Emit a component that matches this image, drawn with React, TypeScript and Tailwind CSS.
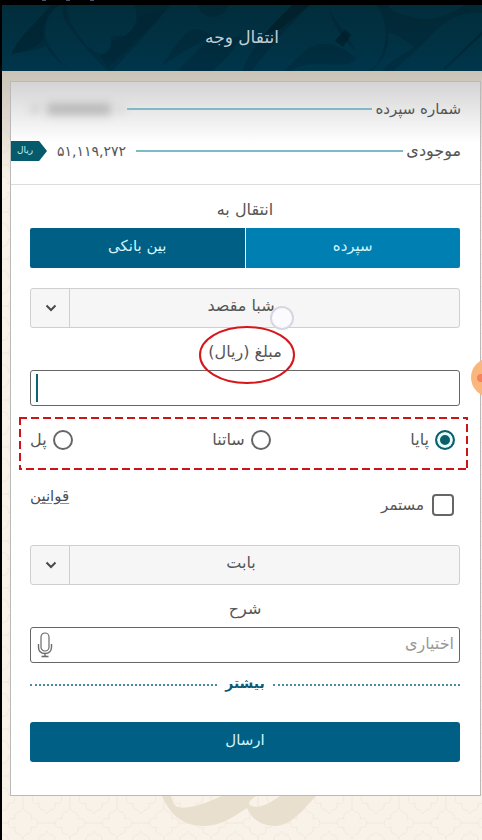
import React, { useState } from 'react';

const TRANSFER_TYPES = [
  { id: 'paya', label: 'پایا' },
  { id: 'satna', label: 'ساتنا' },
  { id: 'pol', label: 'پل' },
];

const HeaderPattern = () => (
  <svg
    className="absolute inset-0 w-full h-full"
    viewBox="0 0 480 66"
    preserveAspectRatio="xMidYMid slice"
    aria-hidden="true"
  >
    <defs>
      <linearGradient id="ground" x1="0" y1="0" x2="0" y2="1">
        <stop offset="0" stopColor="#022734" />
        <stop offset="1" stopColor="#002e42" />
      </linearGradient>
      <linearGradient id="band" gradientUnits="userSpaceOnUse" x1="0" y1="0" x2="0" y2="66">
        <stop offset="0" stopColor="#022d3b" />
        <stop offset="1" stopColor="#00354a" />
      </linearGradient>
    </defs>
    <rect width="480" height="66" fill="url(#ground)" />
    <path d="M48 2C34 14 14 30 9 48C20 50 34 42 42 34C40 20 44 8 58 0Z" fill="#01202c" opacity="0.35" />
    <path d="M284 0H308L278 24L262 30Z" fill="#011d27" opacity="0.6" />
    <path d="M164 4C150 22 128 40 106 62L98 50C106 50 112 44 109 36C122 34 134 26 136 12Z" fill="#01222f" opacity="0.3" />
    <g fill="url(#band)">
      <path d="M0 0H48C38 16 18 28 9 50C12 60 18 64 24 66H0Z" />
      <path d="M9 50C24 44 34 48 44 40C50 54 62 60 68 66H20C12 62 8 58 9 50Z" />
      <path d="M58 0C40 12 40 32 50 45C56 54 62 60 68 66H106C92 54 74 32 62 14C60 8 60 3 62 0Z" />
      <path d="M64 0H132C138 14 132 24 124 30C114 32 108 28 109 36C108 44 104 48 98 49C84 44 66 20 64 0Z" />
      <path d="M168 0H196C198 16 224 16 226 0H290C270 20 250 40 240 66H214C224 56 230 46 240 30C222 38 206 26 194 24C180 26 170 48 160 60L170 66H110C130 44 154 20 168 0Z" />
      <path d="M308 0H326C328 14 340 36 358 50C362 54 356 54 350 50C330 34 312 36 298 50L282 66H250C268 42 286 22 308 0Z" />
      <path d="M326 0H374C386 14 386 36 378 54C374 62 366 66 366 66H290C308 52 340 66 352 56C364 46 332 20 326 0Z" />
      <path d="M386 28C392 28 402 34 412 42C400 50 390 54 380 66H370C382 54 388 42 386 28Z" />
      <path d="M480 8C456 6 440 18 426 34C412 48 402 56 392 66H442L480 26Z" />
      <path d="M442 66L480 30V66Z" />
      <path d="M442 0H462C450 8 438 14 420 14C400 10 390 8 386 0H426Z" />
      <path d="M160 60C176 52 190 40 206 34C196 46 184 56 176 66H158Z" />
      <path d="M240 30C234 44 222 56 210 66H240Z" />
    </g>
    <path d="M343 24L349 30L341 42L333 36Z" fill="#011b25" opacity="0.6" />
    <path d="M442 64L480 28" stroke="#01222f" strokeWidth="2" opacity="0.4" />
  </svg>
);

const STAR = 'M-15 0C-14-5-11-5-8-4C-9-8-7-11-4-11C-2-12-1-13 0-15C1-13 2-12 4-11C7-11 9-8 8-4C11-5 14-5 15 0C14 5 11 5 8 4C9 8 7 11 4 11C2 12 1 13 0 15C-1 13-2 12-4 11C-7 11-9 8-8 4C-11 5-14 5-15 0Z';

const PageBackdrop = () => (
  <svg className="absolute inset-0 w-full h-full" aria-hidden="true">
    <defs>
      <pattern id="tiles" width="47" height="47" patternUnits="userSpaceOnUse" x="-2" y="0">
        <g fill="none" stroke="#f1e8dc">
          <path d={STAR} transform="translate(23 24)" />
          <path d={STAR} transform="translate(0 0)" />
          <path d={STAR} transform="translate(47 0)" />
          <path d={STAR} transform="translate(0 47)" />
          <path d={STAR} transform="translate(47 47)" />
          <path d="M0 24H8M38 24H47M23 0V9M23 39V47" />
        </g>
      </pattern>
    </defs>
    <rect width="100%" height="100%" fill="url(#tiles)" />
  </svg>
);

const Watermark = () => (
  <svg className="w-40 h-8" viewBox="0 0 160 32" aria-hidden="true">
    <path
      d="M0 0C8 18 20 30 42 30C60 30 72 20 85 12C90 24 100 30 114 30C132 28 142 12 154 0H118C110 6 98 13 90 10C84 8 88 4 94 0H60C46 6 28 14 16 11C12 10 10 4 9 0Z"
      fill="#e9dfcf"
    />
  </svg>
);

const MicIcon = () => (
  <svg className="w-4 h-7" viewBox="0 0 16 28" fill="none" stroke="#6b6b6b" aria-hidden="true">
    <rect x="4" y="2" width="8" height="18" rx="4" strokeWidth="1.2" />
    <path d="M1.500 13V16C1.500 20 4 22.500 8 22.500S14.500 20 14.500 16V13M8 22.500V25.500" strokeWidth="1.4" />
    <path d="M4.500 25.500H11.500" strokeWidth="1.6" />
  </svg>
);

interface SelectFieldProps {
  label: string;
  children?: React.ReactNode;
}

const SelectField: React.FC<SelectFieldProps> = ({ label, children }) => (
  <div className="relative">
    <select
      aria-label={label}
      className="block w-full h-10 pb-1 pr-2 appearance-none rounded-[3px] border border-[#cfcfd2] bg-[#f6f6f6] text-center text-base text-[#555555]"
    >
      <option>{label}</option>
    </select>
    <span className="absolute inset-y-0 left-0 w-10 pl-[2px] flex items-center justify-center border-r border-[#cfcfd2] pointer-events-none">
      <svg className="w-3 h-3" viewBox="0 0 12 12" fill="none" stroke="#4a4a4a" strokeWidth="2">
        <path d="M1.500 3.500L6 8L10.500 3.500" />
      </svg>
    </span>
    {children}
  </div>
);

const App: React.FC = () => {
  const [target, setTarget] = useState('bank');
  const [transferType, setTransferType] = useState('paya');

  return (
    <div
      dir="rtl"
      className="relative min-h-screen overflow-hidden border-l-2 border-black bg-[#f8f2e8] text-base text-[#555555] font-['DejaVu_Sans',sans-serif]"
    >
      <PageBackdrop />

      {/* Status bar */}
      <div dir="ltr" className="relative h-[5px] bg-black flex gap-5 pl-10">
        <span className="w-1 h-px bg-gray-600" />
        <span className="w-1 h-px bg-gray-600" />
        <span className="w-1 h-px bg-gray-600" />
      </div>

      {/* Header */}
      <header className="relative h-[66px] flex items-center justify-center">
        <HeaderPattern />
        <h1 className="relative text-[17px] text-[#c3ced3]">انتقال وجه</h1>
      </header>

      <main className="relative pt-[10px] pl-2 pr-px bg-linear-to-b from-[#c9c3b8] to-transparent to-15%">
        <div className="border border-[#b9b9b9] bg-white">
          {/* Account summary */}
          <div className="h-[103px] pt-[15px] pr-[19px] border-b border-[#dcdcdc] bg-linear-to-b from-[#d4d4d4] to-white to-60% text-[15px]">
            <div className="h-6 flex items-center gap-[3px]">
              <span>شماره سپرده</span>
              <span className="flex-1 h-0.5 bg-[#7fb9c4]" />
              <span dir="ltr" className="w-[113px] pl-5 flex items-center gap-2 blur-xs">
                <span className="w-2 h-2 bg-[#cacaca]" />
                <span className="w-16 h-3 bg-[#b9b9b9]" />
                <span className="w-1 h-2 bg-[#cacaca]" />
              </span>
            </div>
            <div className="mt-[18px] h-6 flex items-center gap-[3px]">
              <span className="text-base">موجودی</span>
              <span className="flex-1 h-0.5 bg-[#7fb9c4]" />
              <span className="px-[7px] text-sm">۵۱,۱۱۹,۲۷۲</span>
              <span className="w-9 h-5 pr-2 flex items-center justify-center bg-[#055a6b] text-[9px] text-[#c5eef2] [clip-path:polygon(0_0,78%_0,100%_50%,78%_100%,0_100%)]">
                ریال
              </span>
            </div>
          </div>

          <form className="pl-[19px] pr-5 pt-[13px] pb-[33px]" onSubmit={(e) => e.preventDefault()}>
            <h2 className="h-6 mb-[6px] text-center">انتقال به</h2>

            {/* Destination tabs */}
            <div className="grid grid-cols-2 gap-px h-10 text-[15px] text-[#d3f4fb]">
              <button
                type="button"
                onClick={() => setTarget('deposit')}
                aria-pressed={target === 'deposit'}
                className="pb-1 rounded-r-xs bg-[#007fb3]"
              >
                سپرده
              </button>
              <button
                type="button"
                onClick={() => setTarget('bank')}
                aria-pressed={target === 'bank'}
                className="pb-1 rounded-l-xs bg-[#005f84]"
              >
                بین بانکی
              </button>
            </div>

            <div className="mt-5">
              <SelectField label="شبا مقصد">
                <span className="absolute left-60 top-[18px] w-6 h-6 rounded-full border-2 border-[#d8d6e2] bg-[#fbfbfd]" />
              </SelectField>
            </div>

            {/* Amount */}
            <div className="mt-3 mb-[6px] h-6 flex justify-center">
              <label htmlFor="amount" className="relative z-10">
                مبلغ (ریال)
                <svg
                  className="absolute left-1/2 top-1/2 -translate-x-1/2 -translate-y-1/2 w-[100px] h-[68px]"
                  viewBox="0 0 100 68"
                  fill="none"
                  aria-hidden="true"
                >
                  <ellipse cx="52" cy="37" rx="47" ry="28" stroke="#d5161b" strokeWidth="2" />
                </svg>
              </label>
            </div>
            <div className="relative">
              <input
                id="amount"
                inputMode="numeric"
                className="block w-full h-9 px-2 rounded-[3px] border border-[#666666] bg-white"
              />
              <span className="absolute left-[6px] inset-y-1 w-0.5 bg-[#0b6470]" />
            </div>

            {/* Transfer type */}
            <fieldset className="relative -ml-[11px] -mr-2 mt-[11px] h-[53px] pl-[11px] pr-2">
              <svg className="absolute inset-0 w-full h-full" fill="none" aria-hidden="true">
                <rect width="100%" height="100%" stroke="#cf1418" strokeWidth="4" strokeDasharray="8 4" />
              </svg>
              <div className="relative h-[46px] pr-[5px] flex items-center justify-between">
                {TRANSFER_TYPES.map((type) => (
                  <label key={type.id} className="flex items-center gap-[6px]">
                    <input
                      type="radio"
                      name="transferType"
                      checked={transferType === type.id}
                      onChange={() => setTransferType(type.id)}
                      className="appearance-none w-5 h-5 rounded-full border-2 border-[#666666] bg-white checked:border-[#0a5f6b] checked:bg-[#0a5f6b] checked:shadow-[inset_0_0_0_3px_#e8fbfb]"
                    />
                    <span>{type.label}</span>
                  </label>
                ))}
              </div>
            </fieldset>

            <div className="mt-[23px] h-6 pr-[6px] flex items-center justify-between text-[15px]">
              <label className="flex items-center gap-2">
                <input
                  type="checkbox"
                  className="appearance-none w-[22px] h-[22px] rounded-sm border-2 border-[#666666] bg-white checked:bg-[#0a5f6b]"
                />
                <span>مستمر</span>
              </label>
              <a href="#rules" className="self-start -mt-2 text-[#44505a] underline decoration-[#8a9299] underline-offset-2">
                قوانین
              </a>
            </div>

            <div className="mt-7">
              <SelectField label="بابت" />
            </div>

            {/* Description */}
            <label htmlFor="description" className="block mt-3 mb-[6px] h-6 text-center">
              شرح
            </label>
            <div className="relative">
              <input
                id="description"
                placeholder="اختیاری"
                className="block w-full h-9 pb-1 px-[5px] rounded-[3px] border border-[#666666] bg-white placeholder:text-[#999999]"
              />
              <button type="button" aria-label="ورودی صوتی" className="absolute left-[7px] top-1">
                <MicIcon />
              </button>
            </div>

            <button
              type="button"
              className="mt-2 h-6 w-full flex items-center gap-2 text-sm font-bold text-[#0b5b78]"
            >
              <span className="flex-1 mt-1 border-t-2 border-dotted border-[#4b8ca3]" />
              بیشتر
              <span className="flex-1 mt-1 border-t-2 border-dotted border-[#4b8ca3]" />
            </button>

            <button type="submit" className="mt-[27px] h-10 w-full pb-1 rounded-[3px] bg-[#005f84] text-[15px] text-[#d3f4fb]">
              ارسال
            </button>
          </form>
        </div>
      </main>

      <footer dir="ltr" className="relative h-11 pl-40">
        <Watermark />
      </footer>

      {/* Floating assist bubble */}
      <span dir="ltr" className="absolute -right-7 top-[358px] w-[39px] h-[39px] rounded-full bg-[#fbb67c] flex items-center pl-[6px]">
        <span className="w-7 h-2 rounded-full bg-[#f5825a]" />
      </span>
    </div>
  );
};

export default App;
